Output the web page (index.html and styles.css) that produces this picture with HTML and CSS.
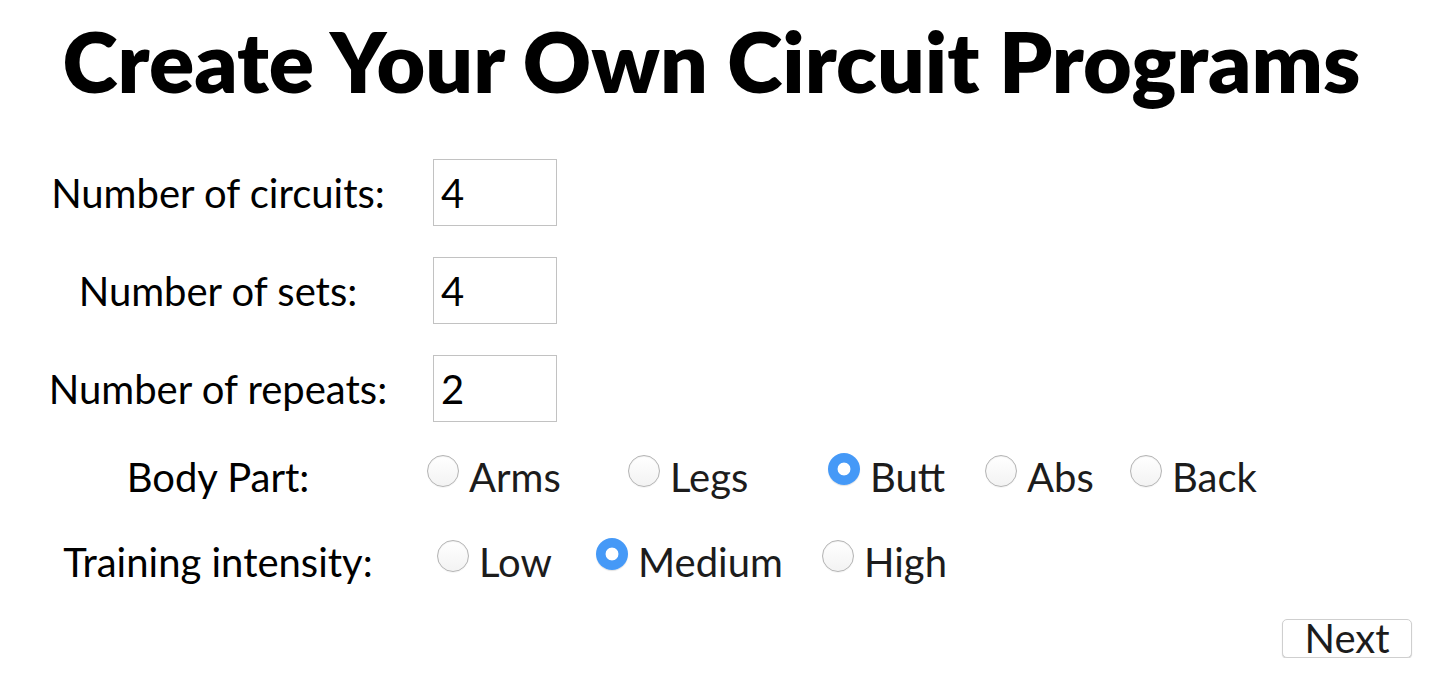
FILE: index.html
```html
<!DOCTYPE html>
<html lang="en">
<head>
<meta charset="utf-8">
<title>Create Your Own Circuit Programs</title>
<link rel="stylesheet" href="styles.css">
</head>
<body>
<main class="page">
  <h1 class="title">Create Your Own Circuit Programs</h1>
  <form class="form">
    <div class="row row-input">
      <label class="label" for="circuits">Number of circuits:</label>
      <div class="field"><input class="num" id="circuits" type="text" value="4"></div>
    </div>
    <div class="row row-input">
      <label class="label" for="sets">Number of sets:</label>
      <div class="field"><input class="num" id="sets" type="text" value="4"></div>
    </div>
    <div class="row row-input">
      <label class="label" for="repeats">Number of repeats:</label>
      <div class="field"><input class="num" id="repeats" type="text" value="2"></div>
    </div>
    <div class="row row-radio">
      <span class="label">Body Part:</span>
      <div class="options options-body">
        <label class="opt"><input class="radio" type="radio" name="part"><span class="opt-text">Arms</span></label>
        <label class="opt"><input class="radio" type="radio" name="part"><span class="opt-text">Legs</span></label>
        <label class="opt"><input class="radio" type="radio" name="part" checked><span class="opt-text">Butt</span></label>
        <label class="opt"><input class="radio" type="radio" name="part"><span class="opt-text">Abs</span></label>
        <label class="opt"><input class="radio" type="radio" name="part"><span class="opt-text">Back</span></label>
      </div>
    </div>
    <div class="row row-radio row-intensity">
      <span class="label">Training intensity:</span>
      <div class="options options-intensity">
        <label class="opt"><input class="radio" type="radio" name="intensity"><span class="opt-text">Low</span></label>
        <label class="opt"><input class="radio" type="radio" name="intensity" checked><span class="opt-text">Medium</span></label>
        <label class="opt"><input class="radio" type="radio" name="intensity"><span class="opt-text">High</span></label>
      </div>
    </div>
    <div class="actions">
      <button class="next" type="button">Next</button>
    </div>
  </form>
</main>
</body>
</html>
```

FILE: styles.css
```css
html, body {
  background: #ffffff;
}

body {
  margin: 8px;
  font-family: "Lato", "Noto Sans", sans-serif;
  color: #000000;
}

.title {
  margin: 3px 0 0 0;
  padding-right: 16px;
  font-size: 84px;
  line-height: 100px;
  font-weight: 800;
  text-align: center;
}

.form {
  display: flex;
  flex-direction: column;
  padding-left: 20px;
  margin-top: 48px;
}

.row {
  display: grid;
  grid-template-columns: 380px 1fr;
  column-gap: 18px;
}

.row-input {
  height: 67px;
  align-items: center;
  margin-bottom: 31px;
}

.label {
  text-align: center;
  font-size: 40px;
  line-height: 48px;
}

.field {
  padding-left: 7px;
}

.num {
  box-sizing: border-box;
  width: 124px;
  height: 67px;
  border: 1px solid #c2c2c2;
  border-radius: 0;
  padding: 0 0 0 7px;
  margin: 0;
  font-family: inherit;
  font-size: 40px;
  color: #000;
  background: #fff;
  outline: none;
}

.row-radio {
  align-items: start;
  height: 48px;
}

.row-intensity {
  margin-top: 37px;
}

.options {
  display: grid;
  align-items: start;
}

.options-body {
  grid-template-columns: 201px 200px 157px 145px auto;
  padding-left: 1px;
}

.options-intensity {
  grid-template-columns: 159px 226px auto;
  padding-left: 11px;
}

.opt {
  display: flex;
  align-items: flex-start;
  color: #1c1c1c;
}

.opt-text {
  font-size: 40px;
  line-height: 48px;
}

.radio {
  appearance: none;
  -webkit-appearance: none;
  box-sizing: border-box;
  width: 32px;
  height: 32px;
  margin: 2px 10px 0 0;
  border-radius: 50%;
  border: 1px solid #b4b4b4;
  background: linear-gradient(#ffffff, #f3f3f3);
  box-shadow: inset 0 1px 1px rgba(0, 0, 0, 0.06), 0 1px 0 rgba(0, 0, 0, 0.04);
  flex: none;
}

.radio:checked {
  margin-top: 0;
  border: none;
  background: radial-gradient(circle, #ffffff 0 6px, #4599f7 6.8px);
  box-shadow: 0 1px 1px rgba(0, 0, 0, 0.12);
}

.actions {
  display: flex;
  justify-content: flex-end;
  padding-right: 19px;
  margin-top: 33px;
}

.next {
  box-sizing: border-box;
  height: 39px;
  width: 130px;
  padding: 0;
  font-family: inherit;
  font-size: 40px;
  line-height: 37px;
  color: #1c1c1c;
  background: #ffffff;
  border: 1px solid #cfcfcf;
  border-radius: 5px;
  box-shadow: 0 1px 1px rgba(0, 0, 0, 0.18);
}
```
